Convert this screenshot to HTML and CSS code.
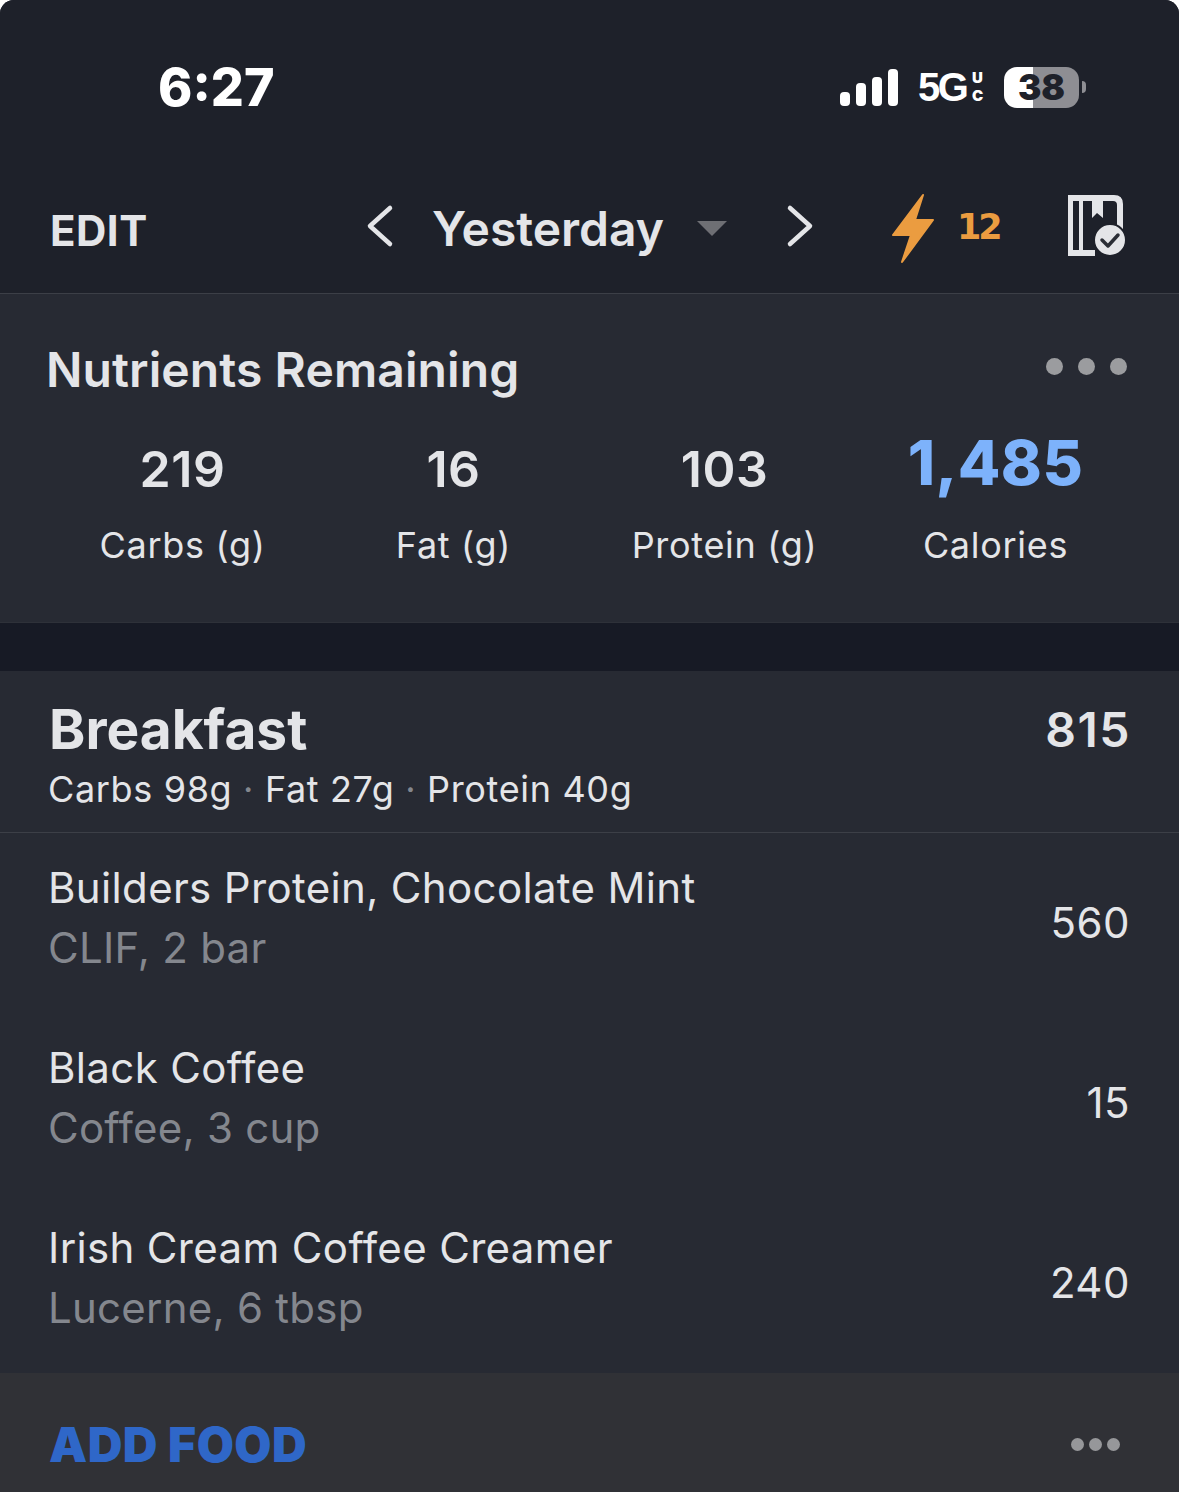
FILE: index.html
```html
<!doctype html>
<html lang="en">
<head>
  <meta charset="utf-8">
  <title>Diary</title>
  <link rel="stylesheet" href="styles.css">
</head>
<body>
  <div class="screen">
    <div class="top">
      <div class="status-bar">
        <div class="time">6:27</div>
        <div class="status-right">
          <svg class="signal" width="58" height="37" viewBox="0 0 58 37">
            <rect x="0" y="23" width="10" height="14" rx="4"/>
            <rect x="16" y="14" width="10" height="23" rx="4"/>
            <rect x="32" y="8" width="10" height="29" rx="4"/>
            <rect x="48" y="0" width="10" height="37" rx="4"/>
          </svg>
          <div class="network">5G</div>
          <div class="uc"><span>U</span><span>C</span></div>
          <div class="battery"><span>38</span></div>
          <div class="battery-tip"></div>
        </div>
      </div>
      <header class="nav">
        <div class="edit">EDIT</div>
        <div class="date-nav">
          <svg class="chevron" width="28" height="46" viewBox="0 0 28 46">
            <path d="M24 5 L4 23 L24 41"/>
          </svg>
          <div class="date">Yesterday</div>
          <div class="caret"></div>
          <svg class="chevron" width="28" height="46" viewBox="0 0 28 46">
            <path d="M4 5 L24 23 L4 41"/>
          </svg>
        </div>
        <div class="streak">
          <svg width="44" height="72" viewBox="0 0 44 72">
            <path class="bolt" d="M32 2 L2 42 L20 42 L11 69 L42 27 L24 27 Z"/>
          </svg>
          <span>12</span>
        </div>
        <svg class="plan-icon" width="58" height="66" viewBox="0 0 58 66">
          <path class="book" d="M1 2 H47 Q56 2 56 11 V37 H50 V12 Q50 8 46 8 H36 V25 L30 20 L25 25 V8 H16 V57 H28 V63 H1 Z M6 8 V57 H12 V8 Z"/>
          <circle class="check-bg" cx="43" cy="47" r="16"/>
          <path class="check" d="M35 47 L41 53 L51 42"/>
        </svg>
      </header>
    </div>

    <section class="summary">
      <div class="summary-head">
        <h2>Nutrients Remaining</h2>
        <div class="dots"><i></i><i></i><i></i></div>
      </div>
      <div class="macros">
        <div class="macro"><div class="val">219</div><div class="lbl">Carbs (g)</div></div>
        <div class="macro"><div class="val">16</div><div class="lbl">Fat (g)</div></div>
        <div class="macro"><div class="val">103</div><div class="lbl">Protein (g)</div></div>
        <div class="macro cals"><div class="val">1,485</div><div class="lbl">Calories</div></div>
      </div>
    </section>

    <section class="meal">
      <div class="meal-head">
        <div class="meal-title">
          <h1>Breakfast</h1>
          <div class="meal-total">815</div>
        </div>
        <div class="meal-macros">Carbs 98g <b>·</b> Fat 27g <b>·</b> Protein 40g</div>
      </div>
      <div class="food">
        <div>
          <div class="food-name">Builders Protein, Chocolate Mint</div>
          <div class="food-desc">CLIF, 2 bar</div>
        </div>
        <div class="food-cal">560</div>
      </div>
      <div class="food">
        <div>
          <div class="food-name">Black Coffee</div>
          <div class="food-desc">Coffee, 3 cup</div>
        </div>
        <div class="food-cal">15</div>
      </div>
      <div class="food">
        <div>
          <div class="food-name">Irish Cream Coffee Creamer</div>
          <div class="food-desc">Lucerne, 6 tbsp</div>
        </div>
        <div class="food-cal">240</div>
      </div>
    </section>

    <footer class="add-row">
      <div class="add-food">ADD FOOD</div>
      <div class="small-dots"><i></i><i></i><i></i></div>
    </footer>
  </div>
</body>
</html>
```

FILE: styles.css
```css
:root {
  --top-bg: #1e212a;
  --panel-bg: #272a33;
  --gap-bg: #171a25;
  --text: #e4e5e8;
  --muted: #84878e;
  --line: #3c3f47;
}
html, body {
  margin: 0;
  padding: 0;
  background: #fff;
}
.screen {
  width: 1179px;
  height: 1492px;
  overflow: hidden;
  border-radius: 14px 14px 0 0;
  background: var(--gap-bg);
  font-family: Inter, 'Noto Sans', sans-serif;
  color: var(--text);
  display: flex;
  flex-direction: column;
}
.top {
  background: var(--top-bg);
  border-bottom: 1px solid var(--line);
  height: 294px;
  flex: none;
  box-sizing: border-box;
}
.status-bar {
  display: flex;
  align-items: center;
  justify-content: space-between;
  height: 174px;
  padding: 0 93px 0 158px;
  box-sizing: border-box;
}
.time {
  font-size: 52px;
  font-weight: 800;
  color: #fff;
}
.status-right {
  display: flex;
  align-items: center;
}
.signal rect {
  fill: #fff;
}
.network {
  width: 48px;
  margin-left: 20px;
  font-family: 'Liberation Sans', sans-serif;
  font-size: 40px;
  font-weight: 700;
  letter-spacing: -2.5px;
  color: #fff;
}
.uc {
  display: flex;
  flex-direction: column;
  align-items: center;
  width: 15px;
  margin-left: 4px;
  font-size: 15px;
  font-weight: 900;
  color: #fff;
}
.uc span {
  height: 18px;
  line-height: 18px;
}
.battery {
  width: 75px;
  height: 41px;
  margin-left: 19px;
  border-radius: 13px;
  background: linear-gradient(90deg, #fff 0, #fff 29px, #8e8e93 29px);
  display: flex;
  align-items: center;
  justify-content: center;
  color: #1e212a;
  font-size: 35px;
  font-weight: 900;
}
.battery-tip {
  width: 4px;
  height: 12px;
  margin-left: 3px;
  background: #8e8e93;
  border-radius: 0 6px 6px 0;
}
.nav {
  display: flex;
  align-items: center;
  height: 119px;
  padding: 0 0 10px 50px;
  box-sizing: border-box;
}
.edit {
  font-size: 42px;
  font-weight: 700;
  letter-spacing: 0.5px;
  width: 316px;
  padding-top: 4px;
  flex: none;
}
.date-nav {
  display: flex;
  align-items: center;
  width: 525px;
  flex: none;
}
.chevron {
  margin-bottom: 6px;
  flex: none;
}
.chevron path {
  fill: none;
  stroke: var(--text);
  stroke-width: 4.5;
  stroke-linecap: round;
  stroke-linejoin: round;
}
.date {
  font-size: 48px;
  font-weight: 600;
  margin-left: 38px;
  width: 265px;
  flex: none;
}
.caret {
  width: 0;
  height: 0;
  border-left: 15px solid transparent;
  border-right: 15px solid transparent;
  border-top: 15px solid #6e6f74;
  margin-right: 59px;
  flex: none;
}
.streak {
  display: flex;
  align-items: center;
  width: 176px;
  gap: 22px;
  flex: none;
}
.streak span {
  font-family: 'DejaVu Sans', sans-serif;
  font-size: 35px;
  font-weight: 700;
  letter-spacing: -3px;
  color: #eb9c40;
  margin-bottom: 4px;
}
.bolt {
  fill: #eb9c40;
  stroke: #eb9c40;
  stroke-width: 2;
  stroke-linejoin: round;
}
.plan-icon {
  margin-bottom: 6px;
  flex: none;
}
.book {
  fill: #e4e5e8;
  fill-rule: evenodd;
}
.check-bg {
  fill: #e4e5e8;
  stroke: #1e212a;
  stroke-width: 2;
}
.check {
  fill: none;
  stroke: #2b2e36;
  stroke-width: 3.5;
  stroke-linecap: round;
  stroke-linejoin: round;
}
.summary {
  height: 329px;
  flex: none;
  background: var(--panel-bg);
  box-sizing: border-box;
  padding: 45px 52px 0 47px;
  border-bottom: 1px solid #2e3139;
}
.summary-head {
  display: flex;
  justify-content: space-between;
  align-items: flex-start;
}
.summary-head h2 {
  margin: 1px 0 0 -1px;
  font-size: 48px;
  line-height: 60px;
  font-weight: 600;
  letter-spacing: 0.1px;
}
.dots {
  display: flex;
  gap: 15px;
  padding-top: 19px;
}
.dots i {
  display: block;
  width: 17px;
  height: 17px;
  border-radius: 50%;
  background: #9b9c9f;
}
.macros {
  display: grid;
  grid-template-columns: repeat(4, 271px);
  margin-top: 33px;
}
.macro {
  display: flex;
  flex-direction: column;
  align-items: center;
}
.val {
  height: 72px;
  font-size: 50px;
  line-height: 72px;
  font-weight: 600;
  letter-spacing: 0.5px;
}
.lbl {
  font-size: 36px;
  line-height: 44px;
  letter-spacing: 0.7px;
  margin-top: 18px;
}
.cals .val {
  font-size: 62px;
  font-weight: 800;
  line-height: 60px;
  letter-spacing: 0.4px;
  color: #7db2fb;
}
.meal {
  margin-top: 48px;
  flex: 1;
  background: var(--panel-bg);
}
.meal-head {
  height: 162px;
  box-sizing: border-box;
  padding: 26px 48px 0 49px;
  border-bottom: 1px solid var(--line);
}
.meal-title {
  display: flex;
  justify-content: space-between;
  align-items: center;
}
.meal-title h1 {
  margin: 0;
  font-size: 55px;
  line-height: 64px;
  font-weight: 700;
}
.meal-total {
  font-size: 48px;
  font-weight: 600;
  letter-spacing: 1.5px;
}
.meal-macros {
  font-size: 36px;
  line-height: 44px;
  letter-spacing: 0.65px;
  margin: 6px 0 0 -1px;
}
.meal-macros b {
  font-weight: 400;
  color: var(--muted);
}
.food {
  height: 180px;
  box-sizing: border-box;
  padding: 25px 49px 0 48px;
  display: flex;
  justify-content: space-between;
  align-items: flex-start;
}
.food-name {
  font-size: 42px;
  line-height: 60px;
  letter-spacing: 0.35px;
}
.food-desc {
  font-size: 42px;
  line-height: 60px;
  letter-spacing: 0.25px;
  color: var(--muted);
}
.food-cal {
  font-size: 42px;
  line-height: 60px;
  letter-spacing: 0.5px;
  margin-top: 35px;
}
.add-row {
  height: 119px;
  flex: none;
  background: #303136;
  display: flex;
  align-items: center;
  justify-content: space-between;
  padding: 24px 59px 0 49px;
  box-sizing: border-box;
}
.add-food {
  font-size: 48px;
  font-weight: 900;
  letter-spacing: 0.5px;
  color: #2f67c8;
}
.small-dots {
  display: flex;
  gap: 5px;
}
.small-dots i {
  display: block;
  width: 13px;
  height: 13px;
  border-radius: 50%;
  background: #96979a;
}
```
